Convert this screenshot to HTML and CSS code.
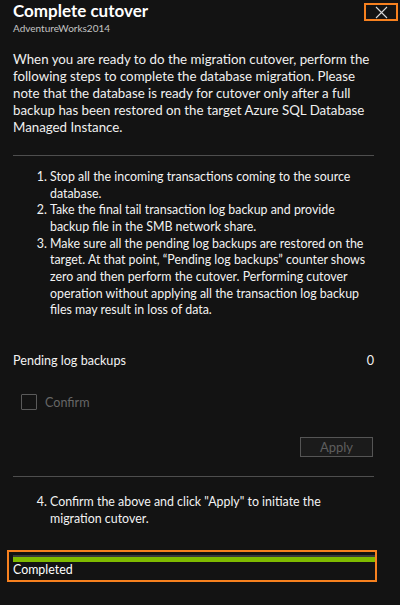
FILE: index.html
```html
<!DOCTYPE html>
<html>
<head>
<meta charset="utf-8">
<link rel="stylesheet" href="styles.css">
</head>
<body>
<div class="blade">
  <header class="head">
    <div class="titles">
      <h1 class="title">Complete cutover</h1>
      <div class="subtitle">AdventureWorks2014</div>
    </div>
    <button class="close" aria-label="Close">
      <svg width="13" height="13" viewBox="0 0 13 13"><path d="M1 1L12 12M12 1L1 12" stroke="#d8d8d8" stroke-width="1.1" fill="none"/></svg>
    </button>
  </header>
  <p class="intro">When you are ready to do the migration cutover, perform the following steps to complete the database migration. Please note that the database is ready for cutover only after a full backup has been restored on the target Azure SQL Database Managed Instance.</p>
  <hr class="rule">
  <ol class="steps">
    <li>Stop all the incoming transactions coming to the source database.</li>
    <li>Take the final tail transaction log backup and provide backup file in the SMB network share.</li>
    <li>Make sure all the pending log backups are restored on the target. At that point, “Pending log backups” counter shows zero and then perform the cutover. Performing cutover operation without applying all the transaction log backup files may result in loss of data.</li>
  </ol>
  <div class="pending">
    <span>Pending log backups</span>
    <span>0</span>
  </div>
  <label class="confirm"><span class="box"></span><span>Confirm</span></label>
  <div class="actions"><button class="apply" disabled>Apply</button></div>
  <hr class="rule rule2">
  <ol class="steps steps4" start="4">
    <li>Confirm the above and click "Apply" to initiate the migration cutover.</li>
  </ol>
  <div class="status">
    <div class="bar"><div class="fill"></div></div>
    <div class="done">Completed</div>
  </div>
</div>
</body>
</html>
```
FILE: styles.css
```css
html, body {
  margin: 0;
  padding: 0;
  background: #131313;
}
body {
  font-family: Lato, "Open Sans", sans-serif;
  color: #f2f2f2;
  width: 400px;
  height: 605px;
  overflow: hidden;
}
.blade {
  padding: 0 0 0 13px;
}
.head {
  display: flex;
  justify-content: space-between;
  align-items: flex-start;
}
.title {
  margin: 0;
  font-size: 17px;
  font-weight: 700;
  line-height: 22px;
  color: #fff;
}
.subtitle {
  font-size: 10px;
  line-height: 12px;
  color: #c4c4c4;
  margin-top: 0;
}
.close {
  margin: 3px 2px 0 0;
  width: 34px;
  height: 18px;
  padding: 0;
  background: transparent;
  border: 2px solid #f7811f;
  display: flex;
  align-items: center;
  justify-content: center;
}
.intro {
  margin: 17px 0 0;
  width: 362px;
  font-size: 13.3px;
  line-height: 17px;
  color: #f0f0f0;
}
.rule {
  margin: 19px 0 0;
  width: 361px;
  border: 0;
  border-top: 1px solid #4e4e4e;
}
.steps {
  margin: 13px 0 0;
  padding-left: 37px;
  width: 320px;
  font-size: 12.4px;
  line-height: 16.67px;
}
.pending {
  margin-top: 33px;
  width: 361px;
  display: flex;
  justify-content: space-between;
  font-size: 12.6px;
  line-height: 17px;
}
.confirm {
  margin: 25px 0 0 8px;
  display: flex;
  align-items: center;
  gap: 8px;
  font-size: 12.6px;
  color: #666;
}
.box {
  width: 14px;
  height: 14px;
  border: 1px solid #5a5a5a;
  border-radius: 1px;
}
.actions {
  width: 361px;
  display: flex;
  justify-content: flex-end;
  margin-top: 27px;
}
.apply {
  width: 73px;
  height: 20px;
  margin-right: 1px;
  background: #1b1b1b;
  border: 1px solid #555;
  color: #5e5e5e;
  font-family: inherit;
  font-size: 13px;
  padding: 0;
  line-height: 17px;
}
.rule2 {
  margin-top: 19px;
}
.steps4 {
  margin-top: 17px;
}
.status {
  margin: 23px 0 0 -6px;
  width: 362px;
  border: 2px solid #f7811f;
  padding: 3px 0 0 4px;
}
.bar {
  border-top: 2px solid #3a3a3a;
  height: 5px;
  background: #7fba00;
}
.fill {
  height: 100%;
}
.done {
  font-size: 12.4px;
  line-height: 16px;
  color: #fff;
  padding-bottom: 2px;
}
```
